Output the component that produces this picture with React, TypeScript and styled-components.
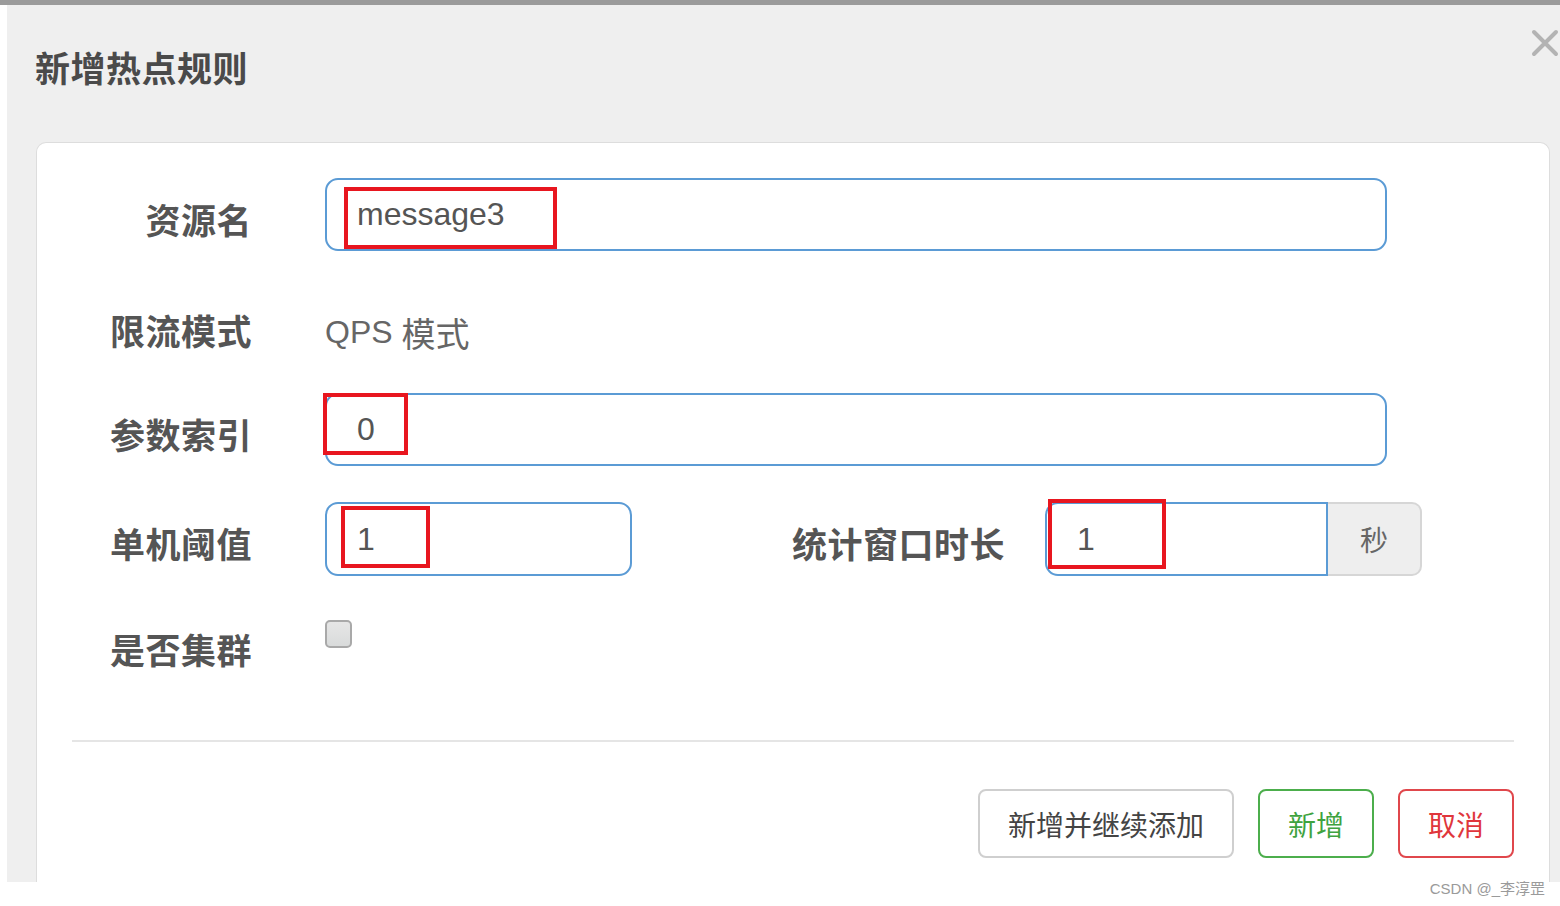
import React from "react";
import styled, { createGlobalStyle } from "styled-components";

const GlobalStyle = createGlobalStyle`
  html, body {
    margin: 0;
    padding: 0;
    background: #ffffff;
  }
  body {
    font-family: "Liberation Sans", "Noto Sans CJK SC", sans-serif;
  }
`;

function CloseIcon() {
  return (
    <svg width="28" height="28" viewBox="0 0 28 28">
      <path d="M3 3 L25 25 M25 3 L3 25" stroke="#b3b3b3" strokeWidth="4" strokeLinecap="round" />
    </svg>
  );
}

function HotParamRuleDialog() {
  return (
    <Page>
      <GlobalStyle />
      <TopStrip />
      <Modal>
        <Header>
          <Title>新增热点规则</Title>
          <CloseButton>
            <CloseIcon />
          </CloseButton>
        </Header>
        <Card>
          <Form>
            <Row $h={73} $mt={0}>
              <Label>资源名</Label>
              <Field $w={1062}>
                message3
                <Mark $x={17} $y={7} $w={213} $h={62} />
              </Field>
            </Row>
            <Row $h={80} $mt={35}>
              <Label>限流模式</Label>
              <StaticText>
                QPS <Wide>模式</Wide>
              </StaticText>
            </Row>
            <Row $h={73} $mt={27}>
              <Label>参数索引</Label>
              <Field $w={1062}>
                0
                <Mark $x={-4} $y={-2} $w={85} $h={62} />
              </Field>
            </Row>
            <Row $h={74} $mt={36}>
              <Label>单机阈值</Label>
              <Field $w={307}>
                1
                <Mark $x={14} $y={2} $w={89} $h={62} />
              </Field>
              <SideLabel>统计窗口时长</SideLabel>
              <InputGroup>
                <Field $w={283} $square>
                  1
                  <Mark $x={1} $y={-5} $w={118} $h={70} />
                </Field>
                <Addon>秒</Addon>
              </InputGroup>
            </Row>
            <Row $h={60} $mt={35} $top>
              <Label $pt={18}>是否集群</Label>
              <Checkbox />
            </Row>
          </Form>
          <Divider />
          <Footer>
            <Button $tone="default">新增并继续添加</Button>
            <Button $tone="success">新增</Button>
            <Button $tone="danger">取消</Button>
          </Footer>
        </Card>
      </Modal>
      <Watermark>CSDN @_李淳罡</Watermark>
    </Page>
  );
}

const tones = {
  default: { border: "#cfcfcf", color: "#444444" },
  success: { border: "#4cae4c", color: "#3fa33f" },
  danger: { border: "#e0474c", color: "#e0363c" },
};

const Page = styled.div`
  width: 1560px;
  height: 906px;
  display: flex;
  flex-direction: column;
  overflow: hidden;
  background: #ffffff;
`;

const TopStrip = styled.div`
  height: 5px;
  background: #9b9b9b;
  flex-shrink: 0;
`;

const Modal = styled.div`
  margin-left: 7px;
  height: 877px;
  background: #efefef;
  display: flex;
  flex-direction: column;
  overflow: hidden;
  flex-shrink: 0;
`;

const Header = styled.div`
  height: 137px;
  display: flex;
  justify-content: space-between;
  align-items: flex-start;
  padding-left: 28px;
  padding-right: 1px;
  flex-shrink: 0;
`;

const Title = styled.h4`
  margin: 42px 0 0;
  font-family: "Noto Sans CJK SC", sans-serif;
  font-size: 35px;
  line-height: 40px;
  font-weight: 700;
  letter-spacing: 0.5px;
  color: #4a4a4a;
`;

const CloseButton = styled.div`
  margin-top: 24px;
  width: 28px;
  height: 28px;
`;

const Card = styled.div`
  margin: 0 10px 0 29px;
  min-height: 800px;
  background: #ffffff;
  border: 1px solid #dddddd;
  border-bottom: none;
  border-radius: 10px 10px 0 0;
  flex-shrink: 0;
`;

const Form = styled.div`
  display: flex;
  flex-direction: column;
  padding-top: 35px;
`;

const Row = styled.div<{ $h: number; $mt: number; $top?: boolean }>`
  display: flex;
  align-items: ${(p) => (p.$top ? "flex-start" : "center")};
  height: ${(p) => p.$h}px;
  margin-top: ${(p) => p.$mt}px;
`;

const Label = styled.div<{ $pt?: number }>`
  width: 215px;
  margin-right: 73px;
  flex-shrink: 0;
  text-align: right;
  padding-top: ${(p) => p.$pt ?? 8}px;
  font-family: "Noto Sans CJK SC", sans-serif;
  font-size: 35px;
  line-height: 40px;
  font-weight: 700;
  color: #555555;
  letter-spacing: 0.5px;
`;

const SideLabel = styled(Label)`
  width: auto;
  margin-left: 160px;
  margin-right: 40px;
`;

const StaticText = styled.div`
  padding-top: 8px;
  font-size: 32px;
  line-height: 40px;
  color: #666666;
  font-family: "Liberation Sans", "Noto Sans CJK SC", sans-serif;
`;

const Wide = styled.span`
  font-family: "Noto Sans CJK SC", sans-serif;
  font-size: 34px;
  position: relative;
  top: 4px;
`;

const Field = styled.div<{ $w: number; $square?: boolean }>`
  position: relative;
  box-sizing: border-box;
  width: ${(p) => p.$w}px;
  height: 100%;
  display: flex;
  align-items: center;
  padding-left: 30px;
  border: 2px solid #5b9bd5;
  border-radius: ${(p) => (p.$square ? "13px 0 0 13px" : "13px")};
  font-size: 32px;
  color: #555555;
  background: #ffffff;
`;

const Mark = styled.span<{ $x: number; $y: number; $w: number; $h: number }>`
  position: absolute;
  left: ${(p) => p.$x}px;
  top: ${(p) => p.$y}px;
  width: ${(p) => p.$w}px;
  height: ${(p) => p.$h}px;
  box-sizing: border-box;
  border: 4px solid #e8161f;
  pointer-events: none;
`;

const InputGroup = styled.div`
  display: flex;
  height: 100%;
`;

const Addon = styled.div`
  box-sizing: border-box;
  width: 94px;
  height: 100%;
  display: flex;
  align-items: center;
  justify-content: center;
  background: #eeeeee;
  border: 2px solid #d6d6d6;
  border-left: none;
  border-radius: 0 10px 10px 0;
  font-family: "Noto Sans CJK SC", sans-serif;
  font-size: 28px;
  color: #666666;
`;

const Checkbox = styled.div`
  margin-top: 9px;
  width: 27px;
  height: 28px;
  box-sizing: border-box;
  border: 2px solid #a9a9a9;
  border-radius: 5px;
  background: linear-gradient(#e6e6e6, #d9dbdb);
`;

const Divider = styled.div`
  margin: 69px 35px 0 35px;
  height: 2px;
  background: #e5e5e5;
`;

const Footer = styled.div`
  display: flex;
  justify-content: flex-end;
  gap: 24px;
  padding: 47px 35px 0 0;
`;

const Button = styled.div<{ $tone: keyof typeof tones }>`
  box-sizing: border-box;
  height: 69px;
  padding: 0 28px;
  display: flex;
  align-items: center;
  justify-content: center;
  border: 2px solid ${(p) => tones[p.$tone].border};
  border-radius: 8px;
  color: ${(p) => tones[p.$tone].color};
  font-family: "Noto Sans CJK SC", sans-serif;
  font-size: 28px;
  background: #ffffff;
`;

const Watermark = styled.div`
  align-self: flex-end;
  margin-right: 15px;
  font-family: "Liberation Sans", "Noto Sans CJK SC", sans-serif;
  font-size: 15px;
  line-height: 14px;
  color: #9a9a9a;
`;

export default HotParamRuleDialog;
